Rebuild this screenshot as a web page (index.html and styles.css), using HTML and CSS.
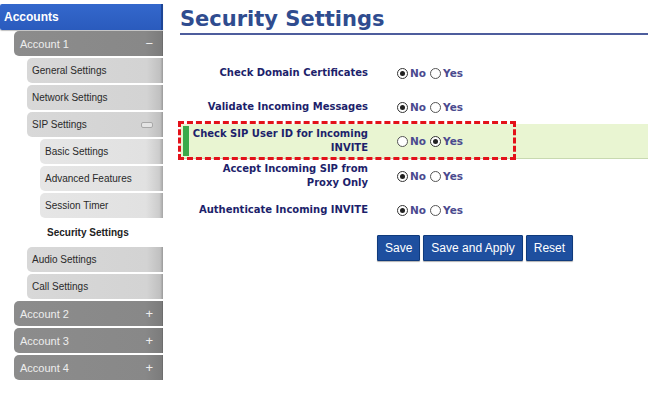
FILE: index.html
```html
<!DOCTYPE html>
<html>
<head>
<meta charset="utf-8">
<link rel="stylesheet" href="styles.css">
</head>
<body>
<div class="page">
  <nav class="sidebar">
    <div class="nav-head">Accounts</div>
    <div class="nav-acc">Account 1<span class="sign">−</span></div>
    <div class="nav-sub">General Settings</div>
    <div class="nav-sub">Network Settings</div>
    <div class="nav-sub">SIP Settings<span class="pill"></span></div>
    <div class="nav-sub2">Basic Settings</div>
    <div class="nav-sub2">Advanced Features</div>
    <div class="nav-sub2">Session Timer</div>
    <div class="nav-sub2 active">Security Settings</div>
    <div class="nav-sub">Audio Settings</div>
    <div class="nav-sub">Call Settings</div>
    <div class="nav-acc closed">Account 2<span class="sign">+</span></div>
    <div class="nav-acc closed">Account 3<span class="sign">+</span></div>
    <div class="nav-acc closed">Account 4<span class="sign">+</span></div>
  </nav>
  <main class="main">
    <h1 class="title">Security Settings</h1>
    <div class="form">
      <div class="row">
        <div class="label">Check Domain Certificates</div>
        <div class="opts"><span class="radio on"></span>No<span class="radio second"></span>Yes</div>
      </div>
      <div class="row">
        <div class="label">Validate Incoming Messages</div>
        <div class="opts"><span class="radio on"></span>No<span class="radio second"></span>Yes</div>
      </div>
      <div class="row hl">
        <div class="label">Check SIP User ID for Incoming INVITE</div>
        <div class="opts"><span class="radio"></span>No<span class="radio second on"></span>Yes</div>
        <div class="mark"></div>
      </div>
      <div class="row">
        <div class="label">Accept Incoming SIP from Proxy Only</div>
        <div class="opts"><span class="radio on"></span>No<span class="radio second"></span>Yes</div>
      </div>
      <div class="row">
        <div class="label">Authenticate Incoming INVITE</div>
        <div class="opts"><span class="radio on"></span>No<span class="radio second"></span>Yes</div>
      </div>
    </div>
    <div class="buttons">
      <button class="btn">Save</button>
      <button class="btn">Save and Apply</button>
      <button class="btn">Reset</button>
    </div>
  </main>
</div>
</body>
</html>
```
FILE: styles.css
```css
html, body { margin: 0; padding: 0; background: #fff; }
body { width: 648px; height: 396px; overflow: hidden; font-family: "Liberation Sans", Arial, sans-serif; }
.page { display: flex; }
.sidebar { width: 163px; padding-top: 4px; display: flex; flex-direction: column; align-items: flex-end; }
.sidebar > div { box-sizing: border-box; display: flex; align-items: center; position: relative; font-size: 10px; }
.nav-head {
  width: 163px; height: 26px; padding-left: 4px;
  background: linear-gradient(to bottom, #3468cc 0%, #2a5bbd 100%);
  color: #fff; font-weight: bold; font-size: 12px !important;
  border-radius: 2px 0 0 2px; border-right: 2px solid #1d4596;
  box-shadow: 0 1px 1px rgba(0,0,0,0.25);
}
.nav-acc {
  width: 149px; height: 25px; margin-top: 1px; padding-left: 6px;
  background: linear-gradient(to right, #8c8c8c 0%, #888 88%, #7c7c7c 99%, #666 100%);
  color: #eee; font-size: 11px !important; border-radius: 5px 0 0 5px;
}
.nav-acc.closed { margin-top: 2px; }
.nav-sub {
  width: 136px; height: 25px; margin-top: 2px; padding-left: 5px;
  background: linear-gradient(to right, #d8d8d8 0%, #d3d3d3 88%, #c0c0c0 98%, #999 100%);
  color: #2a2a2a; border-radius: 5px 0 0 5px;
}
.nav-sub2 {
  width: 123px; height: 25px; margin-top: 2px; padding-left: 5px;
  background: linear-gradient(to right, #e6e6e6 0%, #e1e1e1 86%, #cccccc 97%, #a5a5a5 100%);
  color: #2a2a2a; border-radius: 5px 0 0 5px;
}
.nav-sub2.active { background: none; font-weight: bold; color: #222; padding-left: 7px; }
.sign { position: absolute; right: 10px; top: 5px; color: #eee; font-size: 13px; }
.pill { position: absolute; right: 10px; top: 10px; width: 10px; height: 4px; border: 1px solid #a8a8a8; border-radius: 2px; background: #e4e4e4; }
.main { flex: 1; padding-left: 17px; }
.title {
  margin: 6px 0 0; padding-bottom: 0; height: 27px;
  font-family: "DejaVu Sans", Verdana, sans-serif; font-size: 21px; font-weight: bold;
  color: #2f4c8f; border-bottom: 2px solid #4d5d9d; line-height: 27px;
}
.form { margin-top: 21px; display: flex; flex-direction: column; }
.row { display: flex; align-items: center; height: 34px; position: relative; }
.row.hl { background: #e9f5d2; height: 34px; border-bottom: 1px solid #c8d9b0; }
.mark { position: absolute; left: 3px; top: 2px; width: 6px; height: 30px; background: #3aaa4a; }
.row.hl::after {
  content: ""; position: absolute; left: -2px; top: -3px; width: 338px; height: 39px;
  border: 3px dashed #e3111a; box-sizing: border-box;
}
.label {
  width: 188px; text-align: right; box-sizing: border-box; padding-left: 8px;
  font-family: "DejaVu Sans", Verdana, sans-serif; font-size: 10px; font-weight: bold; color: #1d1f6b; line-height: 14px;
}
.opts {
  margin-left: 29px; display: flex; align-items: center;
  font-family: "DejaVu Sans", Verdana, sans-serif; font-size: 10.5px; font-weight: bold; color: #4b4a8f;
}
.radio {
  width: 11px; height: 11px; border: 1px solid #555; border-radius: 50%; background: #fff;
  margin-right: 2px; position: relative; box-sizing: border-box; display: inline-block;
}
.radio.second { margin-left: 4px; }
.radio.on { border-color: #333; }
.radio.on::after { content: ""; position: absolute; left: 2px; top: 2px; width: 5px; height: 5px; border-radius: 50%; background: #222; }
.buttons { display: flex; gap: 3px; margin-top: 8px; padding-left: 197px; }
.btn {
  height: 26px; border: 1px solid #0f3a7c; background: #1e4f9f; color: #fff;
  font-family: "Liberation Sans", Arial, sans-serif; font-size: 12px; padding: 0 7px; border-radius: 1px;
  box-shadow: 0 1px 1px rgba(0,0,0,0.3);
}
```
